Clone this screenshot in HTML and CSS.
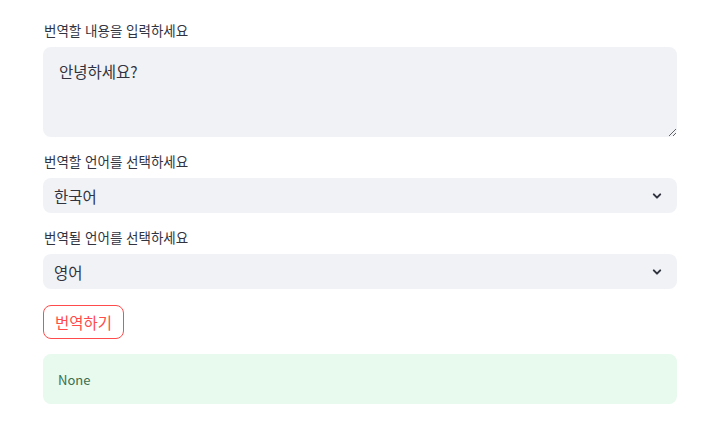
FILE: index.html
```html
<!DOCTYPE html>
<html lang="ko">
<head>
    <meta charset="UTF-8">
    <meta name="viewport" content="width=device-width, initial-scale=1.0">
    <title>번역기</title>
    <link rel="stylesheet" href="styles.css">
</head>
<body>

    <div class="main">
        <div class="field">
            <label class="field-label" for="texto">번역할 내용을 입력하세요</label>
            <textarea id="texto" class="text-area">안녕하세요?</textarea>
        </div>

        <div class="field">
            <label class="field-label">번역할 언어를 선택하세요</label>
            <div class="select-box">
                <span>한국어</span>
                <svg class="chevron" width="12" height="12" viewBox="0 0 12 12"><path d="M2.8 4.4 L6 7.6 L9.2 4.4" fill="none" stroke="#31333f" stroke-width="2" stroke-linecap="round" stroke-linejoin="round"/></svg>
            </div>
        </div>

        <div class="field">
            <label class="field-label">번역될 언어를 선택하세요</label>
            <div class="select-box">
                <span>영어</span>
                <svg class="chevron" width="12" height="12" viewBox="0 0 12 12"><path d="M2.8 4.4 L6 7.6 L9.2 4.4" fill="none" stroke="#31333f" stroke-width="2" stroke-linecap="round" stroke-linejoin="round"/></svg>
            </div>
        </div>

        <div class="field field-button">
            <button type="button" class="btn-traduzir">번역하기</button>
        </div>

        <div class="alert-success">None</div>
    </div>

</body>
</html>
```

FILE: styles.css
```css
body {
    margin: 0;
    font-family: "Noto Sans CJK KR", "Noto Sans", sans-serif;
    color: #31333f;
    background-color: #ffffff;
}

.main {
    width: 634px;
    padding: 20px 0 0 43px;
    display: flex;
    flex-direction: column;
    gap: 14px;
}

.field {
    display: flex;
    flex-direction: column;
}

.field-button {
    margin-top: 2px;
    margin-bottom: 1px;
}

.field-label {
    font-size: 13.5px;
    line-height: 20px;
    height: 20px;
    margin-bottom: 7px;
    padding-left: 1px;
    color: #31333f;
}

.text-area {
    height: 90px;
    box-sizing: border-box;
    padding: 13px 16px;
    border: none;
    border-radius: 8px;
    background-color: #f0f2f6;
    font-family: inherit;
    font-size: 15.5px;
    line-height: 22px;
    color: #31333f;
    resize: vertical;
    outline: none;
}

.select-box {
    height: 35px;
    box-sizing: border-box;
    padding: 0 14px 0 11px;
    border-radius: 8px;
    background-color: #f0f2f6;
    display: flex;
    align-items: center;
    justify-content: space-between;
    font-size: 15.5px;
}

.btn-traduzir {
    align-self: flex-start;
    height: 34px;
    padding: 0 11px;
    border: 1px solid #ff4b4b;
    border-radius: 8px;
    background-color: #ffffff;
    color: #ff4b4b;
    font-family: inherit;
    font-size: 15.5px;
    cursor: pointer;
}

.alert-success {
    height: 50px;
    box-sizing: border-box;
    padding: 0 15px;
    display: flex;
    align-items: center;
    border-radius: 8px;
    background-color: #e8f9ee;
    color: #3a6e4c;
    font-size: 13px;
}
```
